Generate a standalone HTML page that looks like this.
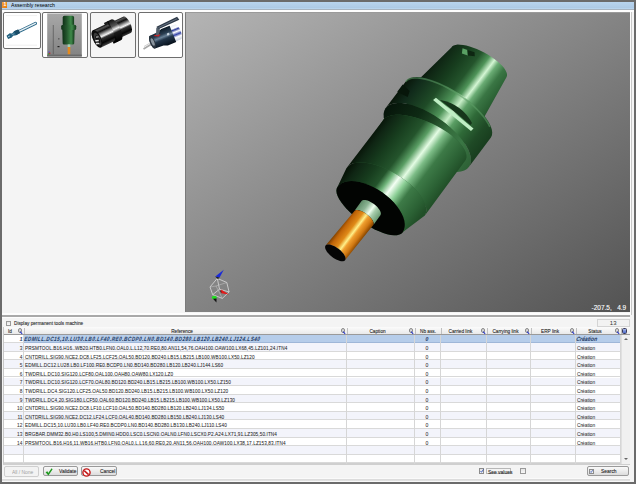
<!DOCTYPE html>
<html><head><meta charset="utf-8">
<style>
*{margin:0;padding:0;box-sizing:border-box}
html,body{width:636px;height:484px;overflow:hidden;background:#6b6b6b;font-family:"Liberation Sans",sans-serif;font-size:6px;color:#222}
.a{position:absolute}
#win{left:2px;top:2px;width:632px;height:479.6px;background:#f4f4f4}
#title{left:2px;top:2px;width:632px;height:7.6px;background:linear-gradient(#b8d4ee,#aecbe6 80%,#bcd8f2);border-bottom:0.6px solid #a8b4c0}
#title .ic{left:0.2px;top:0.4px;width:5.3px;height:5.3px;background:linear-gradient(135deg,#f7a43a,#e67a10);color:#fff;font-size:5px;line-height:5.3px;text-align:center;font-weight:bold}
#title .t{left:8.5px;top:-0.9px;font-size:6px;line-height:8px;color:#000;transform:scaleX(0.86);transform-origin:0 0;white-space:nowrap}
.th{border:1px solid #6e6e6e;border-radius:2px;background:#fff;overflow:hidden}
#vp{left:185px;top:12.4px;width:445px;height:299.6px;background:linear-gradient(to bottom right,#b4b4b4,#535353);border-left:1px solid #7a7a7a;border-top:1px solid #9a9a9a;overflow:hidden}
#vp svg{position:absolute;left:-1px;top:-1px}
.coord{left:405.5px;top:290.6px;color:#fff;font-size:6.5px;line-height:7px;white-space:pre;-webkit-text-stroke:0.1px #fff}
#vpr{left:630px;top:12px;width:2px;height:303px;background:#fbfbfb;border-right:0.6px solid #c8c8c8}
#split{left:2px;top:313.4px;width:628px;height:5px;background:linear-gradient(#fdfdfd 0,#fdfdfd 30%,#a9a9a9 42%,#a9a9a9 72%,#fdfdfd 84%,#fdfdfd 100%)}
.cb{width:5.5px;height:5.5px;border:1px solid #9a9a9a;background:linear-gradient(#e6e6e6,#f8f8f8)}
.lbl{font-size:6px;line-height:7px;color:#222;white-space:nowrap;transform:scaleX(0.78);transform-origin:0 0}
#cnt{left:597px;top:319px;width:32.5px;height:7.5px;border:1px solid #d4d4d4;background:#f2f2f2;text-align:right;padding-right:12px;font-size:6px;line-height:6px;color:#333}
#grid{left:3px;top:326.5px;width:627px;height:138px;background:#fff;border:1px solid #c8c8c8;border-bottom:2px solid #cfcfcf}
#hdr{left:3.5px;top:327px;width:626px;height:7.5px;background:linear-gradient(#fbfbfb,#f1f1f1 60%,#e9e9e9);border-bottom:1px solid #9a9a9a}
.hd{height:8px;line-height:8px;text-align:center;font-size:5.9px;color:#151515;white-space:nowrap;transform:scaleX(0.8)}
.hsep{width:1px;height:6.5px;background:#c0c0c0}
.mag{width:6px;height:6px}
.mag:before{content:"";position:absolute;left:0.3px;top:0.3px;width:2.8px;height:2.8px;border:0.8px solid #8a8a8a;border-radius:50%;background:#d8d8d8}
.mag:after{content:"";position:absolute;left:3px;top:3.1px;width:3.4px;height:1.4px;background:#1f2fc8;transform:rotate(48deg);transform-origin:0 50%}
.colch{width:5px;height:6px;border:1px solid #3a3a5a;background:linear-gradient(#a8b8e8,#4a68c8);border-radius:1.5px}
.rw{left:4px;width:617px;height:8.6px;background:#fff;border-bottom:1.2px solid #d9d9d9}
.rw.alt{background:#f3f4fb}
.sel{left:24px;width:597px;height:8.6px;background:#b6cdea;border-bottom:1px solid #9fb7d8}
.idc,.ref,.nb,.st{margin-top:0.9px;-webkit-text-stroke:0.08px #555}
.lbl,.hd,.bt{-webkit-text-stroke:0.12px #444}
.idc{left:4px;width:18.4px;text-align:right;font-size:6px;line-height:8.6px;color:#333;transform:scaleX(0.8);transform-origin:100% 0}
.ref{left:24.7px;font-size:6px;line-height:8.6px;color:#222;white-space:nowrap;letter-spacing:0.12px;transform:scaleX(0.78);transform-origin:0 0}
.ref.s{letter-spacing:0.61px;transform:scaleX(0.78) skewX(-12deg)}
.nb{left:441px;width:-26px;font-size:6px;line-height:8.6px;color:#333;text-align:center}
.nb{left:414px;width:26px;transform:scaleX(0.85)}
.st{left:576.5px;font-size:6px;line-height:8.6px;color:#333;transform:scaleX(0.8);transform-origin:0 0}
.s{font-weight:bold;font-style:italic;color:#1f3f70}
.vsep{top:334.5px;width:1.2px;height:129px;background:#d6d6d6}
#sb{left:621px;top:334.5px;width:9px;height:129px;background:#f0f0f0;border-left:1px solid #e0e0e0}
.sbup,.sbdn{left:623.5px;width:0;height:0;border-left:2px solid transparent;border-right:2px solid transparent}
.sbup{top:338px;border-bottom:2px solid #666}
.sbdn{top:458px;border-top:2px solid #666}
.btn{height:10.2px;border:1px solid #9a9a9a;border-radius:2px;background:linear-gradient(#f9f9f9,#ececec 50%,#dcdcdc);color:#222;white-space:nowrap}
.btn.dis{color:#a0a0a0;border-color:#cfcfcf;background:#f3f3f3}
.bt{position:absolute;top:0.2px;white-space:nowrap;font-size:6px;line-height:8px;transform:scaleX(0.82);transform-origin:0 0}
.cb2{width:5.7px;height:6px;border:1px solid #8c8c8c;background:linear-gradient(#e2e2e2,#fafafa)}
.sv{border:1px solid #b8b8b8}
#botl{left:2px;top:478px;width:628px;height:3.5px;background:linear-gradient(#fafafa 0,#fafafa 25%,#dcdcdc 35%,#dcdcdc 60%,#f8f8f8 75%)}
.st.s{transform:scaleX(0.86) skewX(-12deg)}
.bt{color:#111}
.btn.dis .bt{color:#a0a0a0;-webkit-text-stroke:0}

</style></head><body>
<div class="a" id="win"></div>
<div class="a" id="title"><div class="a ic">1</div><div class="a t">Assembly research</div></div>
<div class="a" style="left:2px;top:9.8px;width:632px;height:2.4px;background:#fdfdfd"></div>
<div class="a th" style="left:3px;top:12px;width:37.5px;height:37px">
<svg class="a" style="left:-1px;top:-1px" width="38" height="37" viewBox="3 12 38 37">
<line x1="6" y1="15.6" x2="37" y2="15.6" stroke="#ececec" stroke-width="0.8"/>
<line x1="6" y1="45.2" x2="37" y2="45.2" stroke="#ececec" stroke-width="0.8"/>
<g transform="translate(7.2 37.2) rotate(-26)">
<rect x="12" y="-1.6" width="21" height="3.2" rx="1.4" fill="#2d6a8a"/>
<rect x="13" y="-0.7" width="19" height="1.3" fill="#e8f0f4"/>
<path d="M0,-1.6 L4,-2.4 L6,-1.2 L9,-2.4 L13,-2 L13,2 L9,2.2 L6,1.2 L4,2.4 L0,2 Z" fill="#22607e"/>
<rect x="9" y="-2.2" width="4.5" height="4.2" rx="0.6" fill="#1b4d68"/>
<rect x="1" y="-0.5" width="2" height="1" fill="#9cc0d4"/>
<rect x="5" y="-0.4" width="3" height="0.8" fill="#7aa6be"/>
</g>
</svg></div>
<div class="a th" style="left:42px;top:12px;width:46px;height:46px">
<svg class="a" style="left:-1px;top:-1px" width="46" height="46" viewBox="42 12 46 46">
<defs>
<linearGradient id="tg2" x1="0" y1="0" x2="0" y2="1"><stop offset="0" stop-color="#a8a8a8"/><stop offset="1" stop-color="#828282"/></linearGradient>
<linearGradient id="tgg" x1="0" y1="0" x2="1" y2="0"><stop offset="0" stop-color="#0f3016"/><stop offset="0.35" stop-color="#24552d"/><stop offset="0.72" stop-color="#3f8a4a"/><stop offset="0.85" stop-color="#2a6234"/><stop offset="1" stop-color="#123a19"/></linearGradient>
</defs>
<rect x="47.2" y="13.5" width="34.6" height="43" fill="url(#tg2)"/>
<line x1="53.3" y1="25" x2="53.3" y2="54.4" stroke="#555" stroke-width="0.7"/>
<rect x="58" y="38.5" width="1.5" height="0.8" fill="#333"/>
<rect x="57.5" y="46" width="2" height="1.2" fill="#222"/>
<rect x="62.7" y="15.7" width="11.4" height="10" rx="1.8" fill="url(#tgg)"/>
<rect x="61.2" y="24.8" width="15" height="5.3" rx="1.5" fill="url(#tgg)"/>
<path d="M62.3,30 L74.6,30 L74.2,43.5 Q74,44.6 72.8,44.6 L64,44.6 Q62.8,44.6 62.7,43.5 Z" fill="url(#tgg)"/>
<rect x="67.7" y="44.4" width="2.6" height="2.6" fill="#9fd0b0"/>
<rect x="67.7" y="47" width="2.6" height="7.4" fill="#e58a1c"/>
<rect x="47.2" y="54.6" width="34.6" height="1.9" fill="#6a6a6a"/><circle cx="49.5" cy="53.2" r="1" fill="#c03030"/><circle cx="48.6" cy="54" r="0.8" fill="#30a030"/><circle cx="49" cy="52" r="0.8" fill="#5050d0"/>
</svg></div>
<div class="a th" style="left:90px;top:12px;width:45.5px;height:45.5px;background:#f5f5f5">
<svg class="a" style="left:-1px;top:-1px" width="46" height="46" viewBox="90 12 46 46">
<defs>
<linearGradient id="tg3" gradientUnits="userSpaceOnUse" x1="0" y1="-9.5" x2="0" y2="9.5"><stop offset="0" stop-color="#0a0a0a"/><stop offset="0.1" stop-color="#555"/><stop offset="0.22" stop-color="#111"/><stop offset="0.42" stop-color="#bbb"/><stop offset="0.5" stop-color="#f4f4f4"/><stop offset="0.6" stop-color="#333"/><stop offset="0.82" stop-color="#050505"/><stop offset="1" stop-color="#444"/></linearGradient>
<linearGradient id="tg3b" gradientUnits="userSpaceOnUse" x1="0" y1="-11.5" x2="0" y2="11.5"><stop offset="0" stop-color="#111"/><stop offset="0.3" stop-color="#555"/><stop offset="0.45" stop-color="#f0f0f0"/><stop offset="0.6" stop-color="#1a1a1a"/><stop offset="1" stop-color="#000"/></linearGradient>
</defs>
<g transform="translate(97 38.8) rotate(-25)">
<path d="M20,-9 L33,-9 A3.8 9 0 0 1 33,9 L20,9 Z" fill="url(#tg3)"/>
<path d="M13,-11.5 L21,-11.5 A4.6 11.5 0 0 1 21,11.5 L13,11.5 Z" fill="url(#tg3b)"/>
<rect x="16.5" y="-11.5" width="1.2" height="23" fill="#000" opacity="0.7"/>
<path d="M0,-9.5 L14,-9.5 A4 9.5 0 0 1 14,9.5 L0,9.5 A4 9.5 0 0 1 0,-9.5 Z" fill="url(#tg3)"/>
<ellipse cx="0" cy="0" rx="4" ry="9.5" fill="#0d0d0d"/>
<ellipse cx="0.3" cy="0.5" rx="2.8" ry="6.8" fill="#3a3a3a"/>
<ellipse cx="0.5" cy="0.8" rx="1.8" ry="4.3" fill="#111"/>
<rect x="-1.8" y="1" width="3.4" height="1.5" fill="#e8e8e8" transform="rotate(20)"/>
<rect x="-1.6" y="4" width="3.4" height="1.5" fill="#dcdcdc" transform="rotate(20)"/>
<rect x="-0.8" y="-2.5" width="2.5" height="1.3" fill="#bbb" transform="rotate(20)"/>
</g>
</svg></div>
<div class="a th" style="left:137.5px;top:12px;width:45.5px;height:45.5px">
<svg class="a" style="left:-1px;top:-1px" width="46" height="46" viewBox="137.5 12 46 46">
<defs>
<linearGradient id="tg4" gradientUnits="userSpaceOnUse" x1="0" y1="-8.8" x2="0" y2="8.8"><stop offset="0" stop-color="#0d1a26"/><stop offset="0.3" stop-color="#2a3e52"/><stop offset="0.45" stop-color="#6a8298"/><stop offset="0.6" stop-color="#23364a"/><stop offset="1" stop-color="#06101a"/></linearGradient>
<linearGradient id="tg4c" gradientUnits="userSpaceOnUse" x1="0" y1="-8" x2="0" y2="8"><stop offset="0" stop-color="#e8eef6"/><stop offset="0.2" stop-color="#ffffff"/><stop offset="0.3" stop-color="#2a3a98"/><stop offset="0.45" stop-color="#ffffff"/><stop offset="0.62" stop-color="#3545a8"/><stop offset="0.78" stop-color="#ffffff"/><stop offset="1" stop-color="#c8d0e0"/></linearGradient>
</defs>
<path d="M143,49 L152,43.5" stroke="#a8a8a8" stroke-width="1.6"/>
<path d="M143.5,46.5 L152,41.5" stroke="#c8c8c8" stroke-width="0.9"/>
<g transform="translate(152 42.1) rotate(-22)">
<path d="M21,-8 L27.5,-8 A2.8 8 0 0 1 27.5,8 L21,8 Z" fill="url(#tg4c)"/>
<path d="M0,-6.8 L9,-7.2 L13,-8.8 L22,-8.8 L22,8.8 L13,8.8 L9,7.2 L0,6.8 A2.6 6.8 0 0 1 0,-6.8 Z" fill="url(#tg4)"/>
<ellipse cx="0" cy="0" rx="2.6" ry="6.8" fill="#2a343e"/>
<ellipse cx="0.2" cy="0" rx="1.5" ry="4" fill="#8a949e"/>
<circle cx="17.5" cy="-1.5" r="1.3" fill="#c8d4e0"/>
</g>
<path d="M153,36 L156,34.2 L160,34.6 L158,36.4 Z" fill="#d42020"/>
<path d="M155.5,35.5 L155.8,27.8 L158.8,26.6 L159.5,31 L158,35 Z" fill="#55606c"/>
<path d="M156,26.8 L176.6,16.8 L178.8,19.8 L158.4,29 Z" fill="#2e3a48"/>
<path d="M158,27.6 L176.6,18.8" stroke="#8894a4" stroke-width="0.6"/>
</svg></div>

<div class="a" id="vp"><svg width="446" height="301" viewBox="0 0 446 301"><defs><linearGradient id="gUp" gradientUnits="userSpaceOnUse" x1="0" y1="-40" x2="0" y2="40"><stop offset="0" stop-color="#081509"/><stop offset="0.1" stop-color="#0f2614"/><stop offset="0.28" stop-color="#173d1e"/><stop offset="0.45" stop-color="#24542c"/><stop offset="0.56" stop-color="#4f9459"/><stop offset="0.64" stop-color="#d4f6d4"/><stop offset="0.7" stop-color="#6aac74"/><stop offset="0.8" stop-color="#3a7644"/><stop offset="0.92" stop-color="#2b6134"/><stop offset="1" stop-color="#214f28"/></linearGradient><linearGradient id="gFl" gradientUnits="userSpaceOnUse" x1="0" y1="-47" x2="0" y2="55"><stop offset="0" stop-color="#081509"/><stop offset="0.1" stop-color="#10291a"/><stop offset="0.3" stop-color="#1f4b27"/><stop offset="0.46" stop-color="#4f9459"/><stop offset="0.55" stop-color="#c8eec8"/><stop offset="0.62" stop-color="#5a9e64"/><stop offset="0.74" stop-color="#2f6a38"/><stop offset="0.88" stop-color="#1f4a26"/><stop offset="1" stop-color="#183d1e"/></linearGradient><linearGradient id="gBody" gradientUnits="userSpaceOnUse" x1="0" y1="-42.5" x2="0" y2="48.5"><stop offset="0" stop-color="#081509"/><stop offset="0.08" stop-color="#0f2614"/><stop offset="0.22" stop-color="#173d1e"/><stop offset="0.38" stop-color="#24542c"/><stop offset="0.48" stop-color="#5a9e64"/><stop offset="0.565" stop-color="#e4fce4"/><stop offset="0.64" stop-color="#7dbd87"/><stop offset="0.74" stop-color="#3d7a47"/><stop offset="0.9" stop-color="#2b6134"/><stop offset="1" stop-color="#214f28"/></linearGradient><linearGradient id="gCone" gradientUnits="userSpaceOnUse" x1="0" y1="-40" x2="0" y2="46"><stop offset="0" stop-color="#081509"/><stop offset="0.08" stop-color="#0f2614"/><stop offset="0.24" stop-color="#173d1e"/><stop offset="0.37" stop-color="#24542c"/><stop offset="0.45" stop-color="#6fb47a"/><stop offset="0.53" stop-color="#f4fff4"/><stop offset="0.62" stop-color="#8ccf96"/><stop offset="0.72" stop-color="#3d7a47"/><stop offset="0.9" stop-color="#2b6134"/><stop offset="1" stop-color="#214f28"/></linearGradient><linearGradient id="gCol" gradientUnits="userSpaceOnUse" x1="0" y1="-10.5" x2="0" y2="13.5"><stop offset="0" stop-color="#5f8c68"/><stop offset="0.3" stop-color="#8cb594"/><stop offset="0.55" stop-color="#f0fff0"/><stop offset="0.7" stop-color="#a9cfae"/><stop offset="1" stop-color="#6a9a72"/></linearGradient><linearGradient id="gOr" gradientUnits="userSpaceOnUse" x1="0" y1="-12" x2="0" y2="13"><stop offset="0" stop-color="#7a3f00"/><stop offset="0.15" stop-color="#c06408"/><stop offset="0.4" stop-color="#e08a18"/><stop offset="0.56" stop-color="#fff08a"/><stop offset="0.66" stop-color="#f0a030"/><stop offset="0.85" stop-color="#d07812"/><stop offset="1" stop-color="#8a4800"/></linearGradient><linearGradient id="gFace" gradientUnits="userSpaceOnUse" x1="0" y1="-47" x2="0" y2="55"><stop offset="0" stop-color="#06140a"/><stop offset="0.3" stop-color="#0e2a14"/><stop offset="0.45" stop-color="#1d4423"/><stop offset="0.6" stop-color="#346c3c"/><stop offset="0.8" stop-color="#3a7644"/><stop offset="1" stop-color="#2d6035"/></linearGradient></defs><g transform="translate(150.3 240.9) rotate(-53)"><path d="M233.91,-30.92 L235.36,-30.88 L236.87,-30.31 L238.42,-29.22 L239.97,-27.63 L241.5,-25.56 L242.98,-23.06 L244.39,-20.17 L245.7,-16.93 L246.9,-13.4 L247.95,-9.64 L248.85,-5.72 L249.57,-1.69 L250.11,2.36 L250.46,6.37 L250.6,10.27 L250.54,13.99 L250.28,17.48 L249.83,20.67 L249.18,23.5 L248.36,25.93 L247.37,27.92 L246.23,29.43 L244.96,30.44 L243.59,30.92 L172,40.85 L169.78,40.5 L167.6,39.47 L165.49,37.77 L163.5,35.42 L161.64,32.48 L159.97,28.99 L158.51,25 L157.27,20.6 L156.28,15.85 L155.57,10.83 L155.14,5.64 L154.99,0.35 L155.14,-4.94 L155.57,-10.13 L156.28,-15.15 L157.27,-19.9 L158.51,-24.3 L159.97,-28.29 L161.64,-31.78 L163.5,-34.72 L165.49,-37.07 L167.6,-38.77 L169.78,-39.8 L172,-40.15Z" fill="url(#gUp)"/><path d="M235.5,-19 L240,-21.5 L241.5,-16.5 L237.5,-13 Z" fill="#5aa064"/><path d="M237.5,-13 L241.5,-16.5 L244,-9.5 L241,-7 Z" fill="#0e2612"/><path d="M169.93,3.22 L169.97,9.88 L169.62,16.44 L168.9,22.78 L167.81,28.81 L166.38,34.41 L164.62,39.49 L162.56,43.96 L160.25,47.75 L157.73,50.79 L155.02,53.03 L152.19,54.43 L149.28,54.97 L146.34,54.64 L143.41,53.43 L140.56,51.39 L137.83,48.53 L135.26,44.91 L132.9,40.59 L130.79,35.65 L128.97,30.16 L127.46,24.23 L126.3,17.95 L125.5,11.43 L125.07,4.78 L125.03,-1.88 L125.38,-8.44 L126.1,-14.78 L127.19,-20.81 L128.62,-26.41 L130.38,-31.49 L132.44,-35.96 L134.75,-39.75 L137.27,-42.79 L139.98,-45.03 L142.81,-46.43 L145.72,-46.97 L148.66,-46.64 L151.59,-45.43 L154.44,-43.39 L157.17,-40.53 L159.74,-36.91 L162.1,-32.59 L164.21,-27.65 L166.03,-22.16 L167.54,-16.23 L168.7,-9.95 L169.5,-3.43 L169.93,3.22Z" fill="url(#gFace)"/><path d="M179.68,-46.91 L182.2,-46.62 L184.73,-45.47 L187.23,-43.47 L189.65,-40.66 L191.95,-37.08 L194.1,-32.8 L196.05,-27.89 L197.77,-22.44 L199.23,-16.53 L200.41,-10.28 L201.28,-3.77 L201.84,2.86 L202.07,9.52 L201.97,16.08 L201.54,22.43 L200.79,28.47 L199.73,34.09 L198.37,39.19 L196.75,43.7 L194.89,47.52 L192.82,50.6 L190.58,52.88 L188.2,54.33 L185.72,54.91 L149.28,54.97 L152.19,54.43 L155.02,53.03 L157.73,50.79 L160.25,47.75 L162.56,43.96 L164.62,39.49 L166.38,34.41 L167.81,28.81 L168.9,22.78 L169.62,16.44 L169.97,9.88 L169.93,3.22 L169.5,-3.43 L168.7,-9.95 L167.54,-16.23 L166.03,-22.16 L164.21,-27.65 L162.1,-32.59 L159.74,-36.91 L157.17,-40.53 L154.44,-43.39 L151.59,-45.43 L148.66,-46.64 L145.72,-46.97Z" fill="url(#gFl)"/><path d="M179.15,-46.92 L181.23,-46.56 L183.31,-45.61 L185.37,-44.08 L187.39,-42.01 L189.34,-39.39 L191.2,-36.28 L192.94,-32.7 L194.56,-28.7 L196.02,-24.31 L197.31,-19.6 L198.43,-14.62 L199.34,-9.42 L200.05,-4.07 L200.55,1.38 L200.82,6.86 L200.87,12.31 L200.7,17.65 L200.3,22.85 L199.69,27.82 L198.87,32.52 L197.84,36.88 L196.63,40.87 L195.24,44.43 L193.69,47.52" fill="none" stroke="#5c9c66" stroke-width="1.6" stroke-opacity="0.55"/><path d="M166,-47.5 L175,-47.5 L174,-38 L168,-36 Z" fill="#07160a"/><path d="M181,-14 L184.5,-13 L182.5,35.5 L179,35 Z" fill="#bfeec4"/><path d="M185.5,-8 Q195,12 186,31 L183.5,31 L185,-8 Z" fill="#16361b"/><path d="M133.44,-41.69 L135.93,-41.82 L138.54,-41.18 L141.22,-39.77 L143.94,-37.63 L146.64,-34.78 L149.28,-31.29 L151.81,-27.2 L154.19,-22.59 L156.38,-17.54 L158.34,-12.13 L160.04,-6.46 L161.45,-0.62 L162.54,5.29 L163.29,11.16 L163.7,16.9 L163.76,22.4 L163.46,27.58 L162.81,32.34 L161.82,36.61 L160.51,40.31 L158.9,43.37 L157.01,45.75 L154.89,47.4 L152.56,48.29 L57.02,41.37 L55.1,41.1 L53.17,40.16 L51.29,38.57 L49.48,36.34 L47.77,33.52 L46.2,30.15 L44.78,26.3 L43.55,22.02 L42.52,17.4 L41.72,12.51 L41.15,7.44 L40.82,2.26 L40.75,-2.92 L40.93,-8.02 L41.36,-12.96 L42.03,-17.65 L42.93,-22 L44.04,-25.95 L45.36,-29.43 L46.84,-32.37 L48.47,-34.74 L50.23,-36.47 L52.07,-37.56 L53.98,-37.97Z" fill="#2a5e33"/><path d="M133.44,-41.69 L135.93,-41.82 L138.54,-41.18 L141.22,-39.77 L143.94,-37.63 L146.64,-34.78 L149.28,-31.29 L151.81,-27.2 L154.19,-22.59 L156.38,-17.54 L158.34,-12.13 L160.04,-6.46 L161.45,-0.62 L162.54,5.29 L163.29,11.16 L163.7,16.9 L163.76,22.4 L163.46,27.58 L162.81,32.34 L161.82,36.61 L160.51,40.31 L158.9,43.37 L157.01,45.75 L154.89,47.4 L152.56,48.29 L83.79,49.05 L86.42,48.38 L88.93,46.94 L91.27,44.76 L93.39,41.87 L95.28,38.33 L96.88,34.18 L98.18,29.52 L99.14,24.41 L99.77,18.94 L100.04,13.21 L99.95,7.31 L99.5,1.35 L98.7,-4.58 L97.56,-10.37 L96.1,-15.92 L94.36,-21.14 L92.35,-25.94 L90.11,-30.23 L87.68,-33.95 L85.1,-37.02 L82.42,-39.41 L79.68,-41.05 L76.93,-41.94 L74.21,-42.05Z" fill="url(#gBody)"/><path d="M74.21,-42.05 L76.93,-41.94 L79.68,-41.05 L82.42,-39.41 L85.1,-37.02 L87.68,-33.95 L90.11,-30.23 L92.35,-25.94 L94.36,-21.14 L96.1,-15.92 L97.56,-10.37 L98.7,-4.58 L99.5,1.35 L99.95,7.31 L100.04,13.21 L99.77,18.94 L99.14,24.41 L98.18,29.52 L96.88,34.18 L95.28,38.33 L93.39,41.87 L91.27,44.76 L88.93,46.94 L86.42,48.38 L83.79,49.05 L57.02,41.37 L59.76,40.93 L62.41,39.81 L64.95,38.04 L67.33,35.65 L69.51,32.68 L71.44,29.18 L73.11,25.21 L74.47,20.84 L75.51,16.14 L76.2,11.19 L76.54,6.08 L76.53,0.89 L76.15,-4.28 L75.41,-9.35 L74.34,-14.23 L72.95,-18.83 L71.25,-23.09 L69.29,-26.92 L67.09,-30.26 L64.69,-33.06 L62.14,-35.26 L59.47,-36.83 L56.73,-37.74 L53.98,-37.97Z" fill="url(#gCone)"/><path d="M76.53,0.89 L76.54,6.08 L76.2,11.19 L75.51,16.14 L74.47,20.84 L73.11,25.21 L71.44,29.18 L69.51,32.68 L67.33,35.65 L64.95,38.04 L62.41,39.81 L59.76,40.93 L57.02,41.37 L55.1,41.1 L53.17,40.16 L51.29,38.57 L49.48,36.34 L47.77,33.52 L46.2,30.15 L44.78,26.3 L43.55,22.02 L42.52,17.4 L41.72,12.51 L41.15,7.44 L40.82,2.26 L40.75,-2.92 L40.93,-8.02 L41.36,-12.96 L42.03,-17.65 L42.93,-22 L44.04,-25.95 L45.36,-29.43 L46.84,-32.37 L48.47,-34.74 L50.23,-36.47 L52.07,-37.56 L53.98,-37.97 L56.73,-37.74 L59.47,-36.83 L62.14,-35.26 L64.69,-33.06 L67.09,-30.26 L69.29,-26.92 L71.25,-23.09 L72.95,-18.83 L74.34,-14.23 L75.41,-9.35 L76.15,-4.28 L76.53,0.89Z" fill="#020402"/><path d="M57.3,-10.3 L57.95,-10.2 L58.58,-9.9 L59.2,-9.4 L59.78,-8.72 L60.32,-7.86 L60.8,-6.84 L61.23,-5.68 L61.59,-4.4 L61.88,-3.02 L62.09,-1.55 L62.21,-0.04 L62.26,1.5 L62.21,3.04 L62.09,4.55 L61.88,6.02 L61.59,7.4 L61.23,8.68 L60.8,9.84 L60.32,10.86 L59.78,11.72 L59.2,12.4 L58.58,12.9 L57.95,13.2 L57.3,13.3 L44.9,13.6 L45.55,13.5 L46.18,13.2 L46.8,12.7 L47.38,12.02 L47.92,11.16 L48.4,10.14 L48.83,8.98 L49.19,7.7 L49.48,6.32 L49.69,4.85 L49.81,3.34 L49.86,1.8 L49.81,0.26 L49.69,-1.25 L49.48,-2.72 L49.19,-4.1 L48.83,-5.38 L48.4,-6.54 L47.92,-7.56 L47.38,-8.42 L46.8,-9.1 L46.18,-9.6 L45.55,-9.9 L44.9,-10Z" fill="url(#gCol)"/><path d="M44.9,-9.9 L45.54,-9.8 L46.17,-9.5 L46.78,-9.01 L47.36,-8.33 L47.89,-7.48 L48.37,-6.47 L48.8,-5.32 L49.16,-4.05 L49.44,-2.68 L49.65,-1.23 L49.77,0.27 L49.81,1.8 L49.77,3.33 L49.65,4.83 L49.44,6.28 L49.16,7.65 L48.8,8.92 L48.37,10.07 L47.89,11.08 L47.36,11.93 L46.78,12.61 L46.17,13.1 L45.54,13.4 L44.9,13.5 L0,12.2 L0.67,12.1 L1.33,11.78 L1.96,11.27 L2.56,10.57 L3.12,9.68 L3.62,8.63 L4.07,7.43 L4.44,6.1 L4.73,4.67 L4.95,3.16 L5.08,1.59 L5.12,0 L5.08,-1.59 L4.95,-3.16 L4.73,-4.67 L4.44,-6.1 L4.07,-7.43 L3.62,-8.63 L3.12,-9.68 L2.56,-10.57 L1.96,-11.27 L1.33,-11.78 L0.67,-12.1 L0,-12.2Z" fill="url(#gOr)"/><path d="M5.12,0 L5.08,1.59 L4.95,3.16 L4.73,4.67 L4.44,6.1 L4.07,7.43 L3.62,8.63 L3.12,9.68 L2.56,10.57 L1.96,11.27 L1.33,11.78 L0.67,12.1 L0,12.2 L-0.67,12.1 L-1.33,11.78 L-1.96,11.27 L-2.56,10.57 L-3.12,9.68 L-3.62,8.63 L-4.07,7.43 L-4.44,6.1 L-4.73,4.67 L-4.95,3.16 L-5.08,1.59 L-5.12,0 L-5.08,-1.59 L-4.95,-3.16 L-4.73,-4.67 L-4.44,-6.1 L-4.07,-7.43 L-3.62,-8.63 L-3.12,-9.68 L-2.56,-10.57 L-1.96,-11.27 L-1.33,-11.78 L-0.67,-12.1 L-0,-12.2 L0.67,-12.1 L1.33,-11.78 L1.96,-11.27 L2.56,-10.57 L3.12,-9.68 L3.62,-8.63 L4.07,-7.43 L4.44,-6.1 L4.73,-4.67 L4.95,-3.16 L5.08,-1.59 L5.12,-0Z" fill="#050505"/></g></svg><div class="a coord">-207.5,&nbsp;&nbsp;&nbsp;4.9</div></div>
<svg class="a" style="left:0;top:0" width="636" height="484" viewBox="0 0 636 484"><g stroke="#e6e6e6" stroke-width="0.7" fill="none" stroke-linejoin="round"><path d="M217.3,278.4 L226.8,282.5 L229.1,292 L222.3,298.4 L212.7,294.7 L210,287 Z"/><path d="M219.5,289.2 L217.3,278.4 M219.5,289.2 L212.7,294.7 M219.5,289.2 L229.1,292"/><path d="M216,286 L210,287 M216,286 L226.8,282.5 M216,286 L222.3,298.4" stroke="#c8c8c8" stroke-width="0.5"/></g><path d="M215.3,276.5 L223.8,269.8 L219.6,277.6 Z" fill="#1a2ad8"/><path d="M215.2,276.4 L219.7,277.7 L217.8,279 Z" fill="#111"/><path d="M221,289.4 L229,294.6 L221.4,293.2 Z" fill="#e81818"/><path d="M220.6,289.8 L221.8,292.8 L220.4,292 Z" fill="#400"/><ellipse cx="214.3" cy="297.6" rx="2.6" ry="1.8" fill="#22dd22"/><path d="M213,298.8 L216.6,298.6 L216.4,302.6 Z" fill="#111"/></svg>
<div class="a" id="vpr"></div>
<div class="a" id="split"></div>
<div class="a cb" style="left:5.5px;top:320.5px"></div><div class="a lbl" style="left:13.5px;top:320px">Display permanent tools machine</div>
<div class="a" id="cnt">13</div>
<div class="a" id="grid"></div>
<div class="a" id="hdr"></div>
<div class="a hd" style="left:3px;top:326.5px;width:14px;">Id</div>
<div class="a hsep" style="left:23.5px;top:327.5px"></div>
<div class="a mag" style="left:17.4px;top:328.1px"></div>
<div class="a hd" style="left:24px;top:326.5px;width:316px;">Reference</div>
<div class="a hsep" style="left:346.5px;top:327.5px"></div>
<div class="a mag" style="left:340.4px;top:328.1px"></div>
<div class="a hd" style="left:347px;top:326.5px;width:61px;">Caption</div>
<div class="a hsep" style="left:414.5px;top:327.5px"></div>
<div class="a mag" style="left:408.4px;top:328.1px"></div>
<div class="a hd" style="left:415px;top:326.5px;width:26px;">Nb ass.</div>
<div class="a hsep" style="left:440.5px;top:327.5px"></div>
<div class="a hd" style="left:441px;top:326.5px;width:39px;">Carried link</div>
<div class="a hsep" style="left:486.5px;top:327.5px"></div>
<div class="a mag" style="left:480.4px;top:328.1px"></div>
<div class="a hd" style="left:487px;top:326.5px;width:37px;">Carrying link</div>
<div class="a hsep" style="left:530.5px;top:327.5px"></div>
<div class="a mag" style="left:524.4px;top:328.1px"></div>
<div class="a hd" style="left:531px;top:326.5px;width:38px;">ERP link</div>
<div class="a hsep" style="left:575.5px;top:327.5px"></div>
<div class="a mag" style="left:569.4px;top:328.1px"></div>
<div class="a hd" style="left:576px;top:326.5px;width:38px;">Status</div>
<div class="a hsep" style="left:620.5px;top:327.5px"></div>
<div class="a mag" style="left:614.4px;top:328.1px"></div>
<div class="a colch" style="left:622px;top:328px"></div>
<div class="a rw" style="top:334.5px"></div>
<div class="a sel" style="top:334.5px"></div>
<div class="a idc s" style="top:334.5px">1</div>
<div class="a ref s" style="top:334.5px">EDMILL.DC15,10.LU30.LB0.LF40.RE0.BCDP0.LN0.BD140.BD280.LB120.LB240.LJ124.LS40</div>
<div class="a nb s" style="top:334.5px">0</div>
<div class="a st s" style="top:334.5px">Cr&eacute;ation</div>
<div class="a rw alt" style="top:343.1px"></div>
<div class="a idc" style="top:343.1px">3</div>
<div class="a ref" style="top:343.1px">PRSMTOOL.B16.H16..WB20.HTB0.LFN0.OAL0.L.L12,70.RE0,80.AN11,54,76.OAH100.OAW100.LX68,45.LZ101,24.ITN4</div>
<div class="a nb" style="top:343.1px">0</div>
<div class="a st" style="top:343.1px">Cr&eacute;ation</div>
<div class="a rw" style="top:351.7px"></div>
<div class="a idc" style="top:351.7px">4</div>
<div class="a ref" style="top:351.7px">CNTDRILL.SIG90.NCE2.DC8.LF25.LCF25.OAL50.BD120.BD240.LB15.LB215.LB100.WB100.LX50.LZ120</div>
<div class="a nb" style="top:351.7px">0</div>
<div class="a st" style="top:351.7px">Cr&eacute;ation</div>
<div class="a rw alt" style="top:360.3px"></div>
<div class="a idc" style="top:360.3px">5</div>
<div class="a ref" style="top:360.3px">EDMILL.DC12.LU28.LB0.LF100.RE0.BCDP0.LN0.BD140.BD280.LB120.LB240.LJ144.LS60</div>
<div class="a nb" style="top:360.3px">0</div>
<div class="a st" style="top:360.3px">Cr&eacute;ation</div>
<div class="a rw" style="top:368.9px"></div>
<div class="a idc" style="top:368.9px">6</div>
<div class="a ref" style="top:368.9px">TWDRILL.DC10.SIG120.LCF80.OAL100.OAH80.OAW80.LX120.LZ0</div>
<div class="a nb" style="top:368.9px">0</div>
<div class="a st" style="top:368.9px">Cr&eacute;ation</div>
<div class="a rw alt" style="top:377.5px"></div>
<div class="a idc" style="top:377.5px">7</div>
<div class="a ref" style="top:377.5px">TWDRILL.DC10.SIG120.LCF70.OAL80.BD120.BD240.LB15.LB215.LB100.WB100.LX50.LZ150</div>
<div class="a nb" style="top:377.5px">0</div>
<div class="a st" style="top:377.5px">Cr&eacute;ation</div>
<div class="a rw" style="top:386.1px"></div>
<div class="a idc" style="top:386.1px">8</div>
<div class="a ref" style="top:386.1px">TWDRILL.DC4.SIG120.LCF25.OAL50.BD120.BD240.LB15.LB215.LB100.WB100.LX50.LZ120</div>
<div class="a nb" style="top:386.1px">0</div>
<div class="a st" style="top:386.1px">Cr&eacute;ation</div>
<div class="a rw alt" style="top:394.7px"></div>
<div class="a idc" style="top:394.7px">9</div>
<div class="a ref" style="top:394.7px">TWDRILL.DC4,20.SIG180.LCF50.OAL60.BD120.BD240.LB15.LB215.LB100.WB100.LX50.LZ130</div>
<div class="a nb" style="top:394.7px">0</div>
<div class="a st" style="top:394.7px">Cr&eacute;ation</div>
<div class="a rw" style="top:403.3px"></div>
<div class="a idc" style="top:403.3px">10</div>
<div class="a ref" style="top:403.3px">CNTDRILL.SIG90.NCE2.DC8.LF10.LCF10.OAL50.BD140.BD280.LB120.LB240.LJ134.LS50</div>
<div class="a nb" style="top:403.3px">0</div>
<div class="a st" style="top:403.3px">Cr&eacute;ation</div>
<div class="a rw alt" style="top:411.9px"></div>
<div class="a idc" style="top:411.9px">11</div>
<div class="a ref" style="top:411.9px">CNTDRILL.SIG90.NCE2.DC12.LF24.LCF0.OAL40.BD140.BD280.LB150.LB240.LJ130.LS40</div>
<div class="a nb" style="top:411.9px">0</div>
<div class="a st" style="top:411.9px">Cr&eacute;ation</div>
<div class="a rw" style="top:420.5px"></div>
<div class="a idc" style="top:420.5px">12</div>
<div class="a ref" style="top:420.5px">EDMILL.DC15,10.LU30.LB0.LF40.RE0.BCDP0.LN0.BD140.BD280.LB130.LB240.LJ110.LS40</div>
<div class="a nb" style="top:420.5px">0</div>
<div class="a st" style="top:420.5px">Cr&eacute;ation</div>
<div class="a rw alt" style="top:429.1px"></div>
<div class="a idc" style="top:429.1px">13</div>
<div class="a ref" style="top:429.1px">BRGBAR.DMM32.B0.H0.LS100,5.DMIN0.HDD0.LSC0.LSCN0.OALN0.LFN0.LSCX0.P2.A24.LX71,91.LZ305,50.ITN4</div>
<div class="a nb" style="top:429.1px">0</div>
<div class="a st" style="top:429.1px">Cr&eacute;ation</div>
<div class="a rw" style="top:437.7px"></div>
<div class="a idc" style="top:437.7px">14</div>
<div class="a ref" style="top:437.7px">PRSMTOOL.B16.H16,11.WB16.HTB0.LFN0.OAL0.L.L16,60.RE0,20.AN11,56.OAH100.OAW100.LX38,17.LZ153,83.ITN4</div>
<div class="a nb" style="top:437.7px">0</div>
<div class="a st" style="top:437.7px">Cr&eacute;ation</div>
<div class="a rw alt" style="top:446.3px"></div>
<div class="a rw" style="top:454.9px"></div>
<div class="a vsep" style="left:22.8px"></div>
<div class="a vsep" style="left:345.8px"></div>
<div class="a vsep" style="left:413.8px"></div>
<div class="a vsep" style="left:439.8px"></div>
<div class="a vsep" style="left:485.8px"></div>
<div class="a vsep" style="left:529.8px"></div>
<div class="a vsep" style="left:574.8px"></div>
<div class="a vsep" style="left:619.8px"></div>
<div class="a" id="sb"></div><div class="a sbup"></div><div class="a sbdn"></div>
<div class="a btn dis" style="left:4px;top:466.4px;width:35px"><span class="bt" style="left:6.5px">All / None</span></div>
<div class="a btn" style="left:42.6px;top:466.3px;width:35px"><svg class="a" style="left:1px;top:1px" width="8" height="8" viewBox="0 0 8 8"><path d="M0.6,4.2 L2.4,3.2 L3.3,5 L6.6,0.3 L7.6,1.2 L3.4,7.6 Z" fill="#1d9a1d"/></svg><span class="bt" style="left:15.5px">Validate</span></div>
<div class="a btn" style="left:81px;top:466.3px;width:36px"><svg class="a" style="left:0.3px;top:0.4px" width="9" height="9" viewBox="0 0 9 9"><circle cx="4.5" cy="4.5" r="3.6" fill="#fff" stroke="#c41818" stroke-width="1.4"/><path d="M2.2,2.6 L6.6,6.6" stroke="#c41818" stroke-width="1.5"/></svg><span class="bt" style="left:18px">Cancel</span></div>
<div class="a cb2" style="left:478.5px;top:467.8px"><svg class="a" style="left:0;top:0" width="4" height="4" viewBox="0 0 4 4"><path d="M0.5,2 L1.5,3.3 L3.5,0.3" stroke="#2a4ab0" stroke-width="0.8" fill="none"/></svg></div><div class="a sv" style="left:486.2px;top:467.7px;width:25.3px;height:6.6px"><span class="bt" style="left:1px;top:-0.6px">See values</span></div>
<div class="a cb" style="left:520px;top:467.8px;width:5.8px;height:6px"></div>
<div class="a btn" style="left:587px;top:466.2px;width:42.3px"><div class="a cb2" style="left:1.3px;top:2px;width:4.5px;height:4.5px"><svg class="a" style="left:0;top:0" width="3" height="3" viewBox="0 0 3 3"><path d="M0.3,1.5 L1.1,2.5 L2.7,0.2" stroke="#2a4ab0" stroke-width="0.7" fill="none"/></svg></div><span class="bt" style="left:13px">Search</span></div>
<div class="a" id="botl"></div>
</body></html>
